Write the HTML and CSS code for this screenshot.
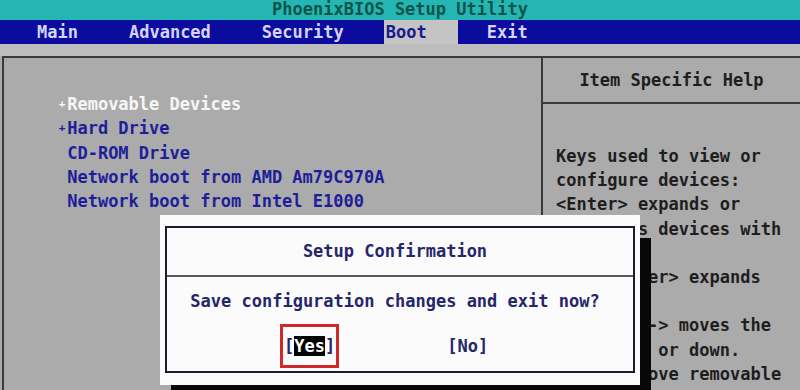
FILE: index.html
```html
<!DOCTYPE html>
<html lang="en">
<head>
    <meta charset="UTF-8">
    <title>PhoenixBIOS Setup Utility</title>
    <link rel="stylesheet" href="styles.css">
</head>
<body>
    <header class="titlebar">PhoenixBIOS Setup Utility</header>
    <nav class="menubar">
        <span class="tab">Main</span>
        <span class="tab">Advanced</span>
        <span class="tab">Security</span>
        <span class="tab active">Boot</span>
        <span class="tab">Exit</span>
    </nav>
    <div class="strip"></div>

    <main class="panel">
        <section class="boot-list">
            <div class="item selected"><span class="mark">+</span>Removable Devices</div>
            <div class="item"><span class="mark">+</span>Hard Drive</div>
            <div class="item"><span class="mark"></span>CD-ROM Drive</div>
            <div class="item"><span class="mark"></span>Network boot from AMD Am79C970A</div>
            <div class="item"><span class="mark"></span>Network boot from Intel E1000</div>
        </section>
        <aside class="help">
            <div class="help-title">Item Specific Help</div>
            <div class="help-body">
                <p>Keys used to view or</p>
                <p>configure devices:</p>
                <p>&lt;Enter&gt; expands or</p>
                <p>collapses devices with</p>
                <p>a + or -</p>
                <p>&lt;Ctrl+Enter&gt; expands</p>
                <p>all</p>
                <p>&lt;+&gt; and &lt;-&gt; moves the</p>
                <p>device up or down.</p>
                <p>&lt;n&gt; May move removable</p>
            </div>
        </aside>
    </main>

    <!-- confirmation popup over the boot page -->
    <div class="dialog">
        <div class="dialog-inner">
            <div class="dialog-title">Setup Confirmation</div>
            <div class="dialog-text">Save configuration changes and exit now?</div>
            <div class="choices">
                <span class="choice yes">[<span class="hl">Yes</span>]</span>
                <span class="choice no">[No]</span>
            </div>
        </div>
    </div>
</body>
</html>
```

FILE: styles.css
```css
body {
    margin: 0;
    width: 800px;
    height: 390px;
    overflow: hidden;
    position: relative;
    display: flex;
    flex-direction: column;
    background-color: #ababab;
    font-family: 'DejaVu Sans Mono', 'Liberation Mono', monospace;
    font-weight: bold;
    font-size: 17px;
}

.titlebar {
    flex-shrink: 0;
    height: 20px;
    line-height: 18px;
    background-color: #25b6b4;
    color: #0d5548;
    text-align: center;
}

.menubar {
    flex-shrink: 0;
    height: 24px;
    line-height: 24px;
    background-color: #0b0b9e;
    display: flex;
    padding-left: 37px;
}

.tab {
    color: #d4d4ff;
}

.tab + .tab {
    margin-left: 51px;
}

.tab.active {
    margin-left: 40px;
    padding: 0 31px 0 2px;
    background-color: #c4c4c4;
    color: #1a1a8c;
}

.tab.active + .tab {
    margin-left: 29px;
}

.strip {
    flex-shrink: 0;
    height: 12px;
    background-color: #bdbdbd;
}

.panel {
    flex: 1;
    min-height: 0;
    display: flex;
    margin-left: 2px;
    border-top: 2px solid #3a3a3a;
    border-left: 2px solid #3a3a3a;
}

.boot-list {
    width: 539px;
    padding: 34px 0 0 53px;
    box-sizing: border-box;
    border-right: 2px solid #3a3a3a;
}

.item {
    line-height: 24.25px;
    color: #1e1e9a;
    white-space: pre;
}

.item.selected {
    color: #f6f6f6;
}

.mark {
    display: inline-block;
    width: 10.2px;
    font-size: 11px;
    text-align: center;
    vertical-align: top;
}

.help {
    flex: 1;
    display: flex;
    flex-direction: column;
}

.help-title {
    flex-shrink: 0;
    height: 44px;
    line-height: 44px;
    text-align: center;
    color: #1e1e1e;
    border-bottom: 2px solid #3a3a3a;
}

.help-body {
    padding: 40px 0 0 13px;
    color: #1e1e1e;
}

.help-body p {
    margin: 0;
    line-height: 24.2px;
    white-space: pre;
}

.dialog {
    position: absolute;
    left: 160px;
    top: 215px;
    width: 480px;
    height: 170px;
    padding: 11px 5px 12px 5px;
    box-sizing: border-box;
    background-color: #fbfbfb;
    box-shadow: 11px 23px 0 #080808;
}

.dialog-inner {
    height: 100%;
    box-sizing: border-box;
    border: 2px solid #1c1c30;
    color: #26266a;
}

.dialog-title {
    height: 47px;
    line-height: 47px;
    text-align: center;
    padding-right: 10px;
    border-bottom: 2px solid #5a5a5a;
}

.dialog-text {
    padding-right: 10px;
    margin-top: 12px;
    line-height: 24px;
    text-align: center;
}

.choices {
    display: flex;
    align-items: center;
    margin-top: 11px;
    padding-left: 113px;
}

.choice.yes {
    border: 3px solid #d02828;
    padding: 7px 1px;
    line-height: 24px;
}

.hl {
    background-color: #050505;
    color: #ffffff;
}

.choice.no {
    margin-left: 108px;
}
```
